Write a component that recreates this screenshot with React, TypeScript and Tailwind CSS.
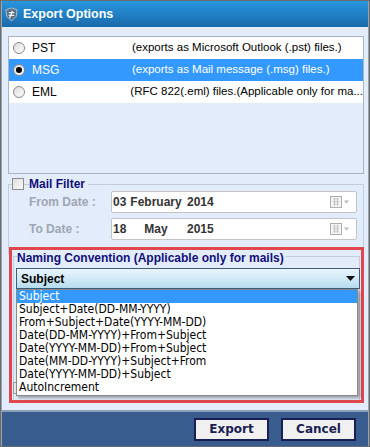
import React from "react";

const F = { fontFamily: '"Liberation Sans", Arial, sans-serif' };

function Radio({ checked }: { checked?: boolean }) {
  return (
    <span className="w-[12px] h-[12px] rounded-full border border-[#8a8a8a] bg-gradient-to-br from-[#dcdcdc] to-white flex items-center justify-center shrink-0">
      {checked && <span className="w-[6px] h-[6px] rounded-full bg-black" />}
    </span>
  );
}

function CalIcon() {
  return (
    <svg width="20" height="12" viewBox="0 0 20 12">
      <rect x="0.5" y="0.5" width="11" height="11" fill="#f4f4f4" stroke="#b0b0b0" />
      <path d="M3 3h6M3 5.5h6M3 8h6M4.5 2v8M7.5 2v8" stroke="#c8c8c8" strokeWidth="1" />
      <path d="M14 4.5h5l-2.5 3z" fill="#b8b8b8" />
    </svg>
  );
}

const options = [
  "Subject",
  "Subject+Date(DD-MM-YYYY)",
  "From+Subject+Date(YYYY-MM-DD)",
  "Date(DD-MM-YYYY)+From+Subject",
  "Date(YYYY-MM-DD)+From+Subject",
  "Date(MM-DD-YYYY)+Subject+From",
  "Date(YYYY-MM-DD)+Subject",
  "AutoIncrement",
];

export default function App() {
  return (
    <div className="w-[370px] h-[447px] bg-[#6b6b6b] p-[1px] flex flex-col" style={F}>
      <div className="flex-1 flex flex-col bg-[#e3ecfa] border-x border-[#9aa4b0] overflow-hidden">
        {/* Title bar */}
        <div className="h-[26px] flex items-center bg-gradient-to-b from-[#2796de] to-[#1a6aab] pl-[2px] gap-[4px] shrink-0">
          <svg width="15" height="15" viewBox="0 0 16 16">
            <path d="M2 3l6-2 6 2-1 7-5 5-5-5z" fill="#5d6f86" stroke="#c9d4e0" strokeWidth="0.8" />
            <path d="M5 6h6M5 9h6" stroke="#e8eef5" strokeWidth="1.3" />
            <path d="M9 4l-3 8" stroke="#ffffff" strokeWidth="1.2" />
          </svg>
          <span className="text-white font-bold text-[12.5px] leading-none">Export Options</span>
        </div>

        <div className="flex-1 flex flex-col pl-[6px] pr-[4px] pt-[9px]">
          {/* Formats list */}
          <div className="h-[138px] border border-[#a9b4c2] bg-[#e3ecfa] shrink-0">
            {[
              ["PST", "(exports as Microsoft Outlook (.pst) files.)", false],
              ["MSG", "(exports as Mail message (.msg) files.)", true],
              ["EML", "(RFC 822(.eml) files.(Applicable only for ma...", false],
            ].map(([n, d, sel]) => (
              <div
                key={n as string}
                className={`h-[22px] flex items-center pl-[4px] whitespace-nowrap ${sel ? "bg-[#3399ff] text-white" : "bg-white text-black"}`}
              >
                <Radio checked={sel as boolean} />
                <span className="ml-[7px] w-[100px] text-[12px]">{n}</span>
                <span className="text-[11.5px]">{d}</span>
              </div>
            ))}
          </div>

          {/* Mail filter */}
          <div className="relative mt-[3px] shrink-0">
            <div className="absolute left-0 right-0 top-[7px] h-[70px] border border-[#c3ccd8] border-b-0 rounded-tr-[2px]" />
            <div className="relative flex items-center gap-[5px] pl-[4px] h-[14px]">
              <span className="w-[12px] h-[12px] border border-[#8d8d8d] bg-gradient-to-br from-[#dedede] to-[#fafafa]" />
              <span className="bg-[#e3ecfa] pr-[3px] text-[12px] leading-[14px] font-bold text-[#10107a]">Mail Filter</span>
            </div>
            <div className="relative flex flex-col gap-[5px] pl-[21px] pr-[7px]">
              {[
                ["From Date :", "03", "February", "2014"],
                ["To Date :", "18", "May", "2015"],
              ].map(([l, d, m, y]) => (
                <div key={l} className="flex items-center h-[22px]">
                  <span className="w-[82px] shrink-0 text-[12px] font-bold text-[#9da6b2]">{l}</span>
                  <div className="flex-1 h-[22px] bg-white border border-[#c4c4c4] rounded-[2px] flex items-center text-[12px] font-bold text-[#333] pl-[1px] pr-[6px] whitespace-nowrap">
                    <span className="w-[12px] shrink-0">{d}</span>
                    <span className="w-[62px] shrink-0 text-center">{m}</span>
                    <span className="shrink-0">{y}</span>
                    <span className="ml-auto"><CalIcon /></span>
                  </div>
                </div>
              ))}
            </div>
          </div>

          {/* Naming convention */}
          <div className="mt-[7px] ml-[1px] h-[156px] border-[3px] border-[#e0474c] relative shrink-0 bg-[#e3ecfa]">
            <div className="absolute left-[1px] right-[1px] top-[6px] bottom-[0px] border border-[#c3ccd8] border-b-0" />
            <div className="absolute left-[1px] top-[132px] w-[4px] h-[12px] border border-[#9a9a9a] bg-[#e8e8e8]" />
            <div className="relative pl-[5px] h-[13px] leading-[13px]">
              <span className="bg-[#e3ecfa] pr-[2px] text-[12px] font-bold text-[#10107a]">Naming Convention (Applicable only for mails)</span>
            </div>
            <div className="relative ml-[4px] mr-[1px] mt-[5px] h-[21px] border border-[#3c5d7c] bg-gradient-to-b from-[#eaf5fc] to-[#b6dcef] flex items-center px-[4px] text-[12px] font-bold text-black">
              <span>Subject</span>
              <svg className="ml-auto" width="9" height="5" viewBox="0 0 9 5"><path d="M0 0h9L4.5 5z" fill="#111" /></svg>
            </div>
            <div className="absolute left-[4px] top-[39px] w-[342px] bg-white border border-[#8a8a8a] shadow-[2px_2px_3px_rgba(0,0,0,0.35)] z-10 pb-[1px]">
              {options.map((o, i) => (
                <div
                  key={o}
                  className={`h-[13px] leading-[13px] pl-[2px] text-[12px] whitespace-nowrap ${i === 0 ? "bg-[#3399ff] text-white" : "text-black"}`}
                  style={{ fontFamily: '"DejaVu Sans Condensed", "DejaVu Sans", sans-serif' }}
                >
                  {o}
                </div>
              ))}
            </div>
          </div>
          <div className="flex-1" />
        </div>

        {/* Bottom bar */}
        <div className="h-[36px] bg-[#375c8d] border-t-[2px] border-[#8d9fb6] flex items-center justify-end gap-[12px] pr-[12px] shrink-0">
          {["Export", "Cancel"].map((b) => (
            <button
              key={b}
              className="w-[75px] h-[23px] bg-[#f0f0f0] border-[2px] border-[#1b1e52] text-[12px] font-bold text-[#1b1e52]"
              style={{ fontFamily: '"DejaVu Sans", sans-serif' }}
            >
              {b}
            </button>
          ))}
        </div>
      </div>
    </div>
  );
}
